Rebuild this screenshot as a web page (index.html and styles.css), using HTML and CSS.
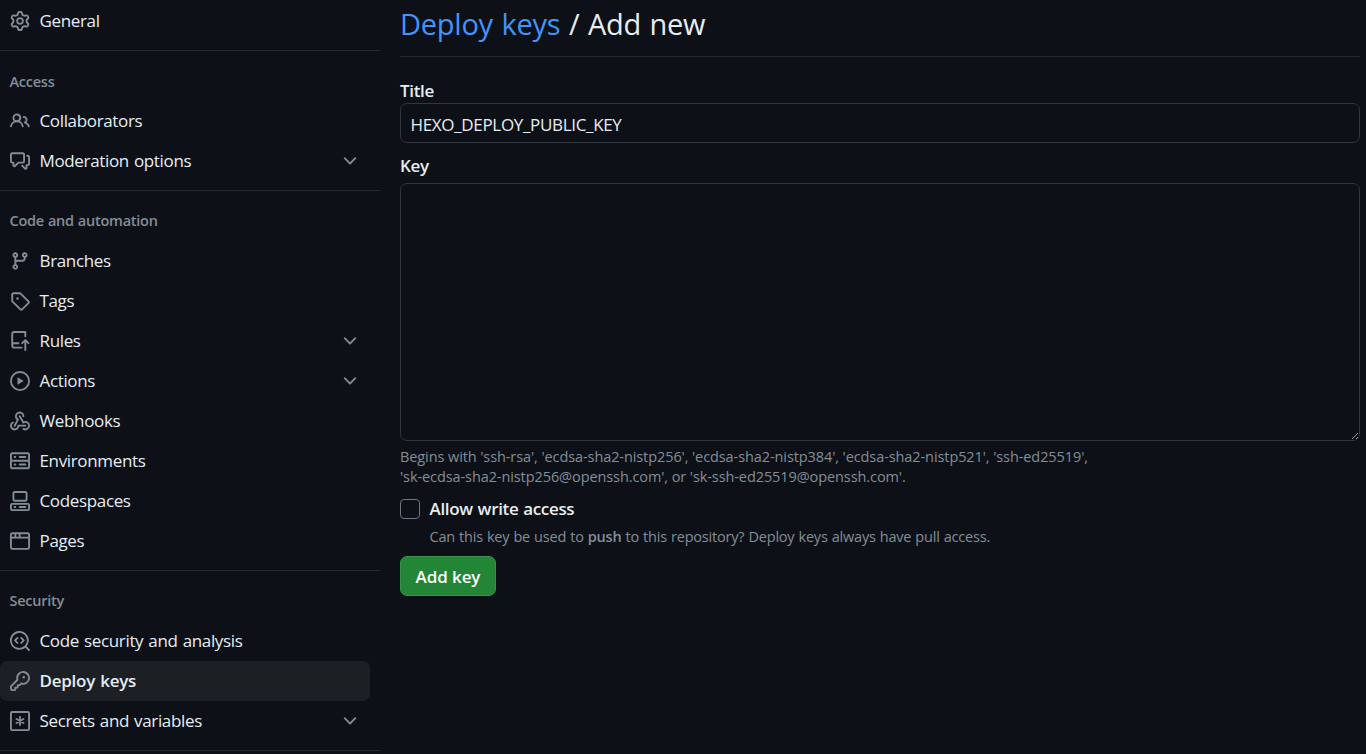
FILE: index.html
```html
<!DOCTYPE html>
<html lang="en">
<head>
<meta charset="utf-8">
<title>Deploy keys / Add new</title>
<link rel="stylesheet" href="styles.css">
</head>
<body>
<svg class="defs" width="0" height="0">
  <symbol id="chevron" viewBox="0 0 16 16"><path d="M12.78 5.22a.749.749 0 0 1 0 1.06l-4.25 4.25a.749.749 0 0 1-1.06 0L3.22 6.28a.749.749 0 1 1 1.06-1.06L8 8.939l3.72-3.719a.749.749 0 0 1 1.06 0Z"/></symbol>
</svg>
<div class="layout">
  <nav class="sidebar">
    <ul class="group">
      <li class="item"><svg class="icon" viewBox="0 0 16 16"><path d="M8 0a8.2 8.2 0 0 1 .701.031C9.444.095 9.99.645 10.16 1.29l.288 1.107c.018.066.079.158.212.224.231.114.454.243.668.386.123.082.233.09.299.071l1.103-.303c.644-.176 1.392.021 1.82.63.27.385.506.792.704 1.218.315.675.111 1.422-.364 1.891l-.814.806c-.049.048-.098.147-.088.294.016.257.016.515 0 .772-.01.147.038.246.088.294l.814.806c.475.469.679 1.216.364 1.891a7.977 7.977 0 0 1-.704 1.217c-.428.61-1.176.807-1.82.63l-1.102-.302c-.067-.019-.177-.011-.3.071a5.909 5.909 0 0 1-.668.386c-.133.066-.194.158-.211.224l-.29 1.106c-.168.646-.715 1.196-1.458 1.26a8.006 8.006 0 0 1-1.402 0c-.743-.064-1.289-.614-1.458-1.26l-.289-1.106c-.018-.066-.079-.158-.212-.224a5.738 5.738 0 0 1-.668-.386c-.123-.082-.233-.09-.299-.071l-1.103.303c-.644.176-1.392-.021-1.82-.63a8.12 8.12 0 0 1-.704-1.218c-.315-.675-.111-1.422.363-1.891l.815-.806c.05-.048.098-.147.088-.294a6.214 6.214 0 0 1 0-.772c.01-.147-.038-.246-.088-.294l-.815-.806C.635 6.045.431 5.298.746 4.623a7.92 7.92 0 0 1 .704-1.217c.428-.61 1.176-.807 1.82-.63l1.102.302c.067.019.177.011.3-.071.214-.143.437-.272.668-.386.133-.066.194-.158.211-.224l.29-1.106C6.009.645 6.556.095 7.299.03 7.53.01 7.764 0 8 0Zm-.571 1.525c-.036.003-.108.036-.137.146l-.289 1.105c-.147.561-.549.967-.998 1.189-.173.086-.34.183-.5.29-.417.278-.97.423-1.529.27l-1.103-.303c-.109-.03-.175.016-.195.045-.22.312-.412.644-.573.99-.014.031-.021.11.059.19l.815.806c.411.406.562.957.53 1.456a4.709 4.709 0 0 0 0 .582c.032.499-.119 1.05-.53 1.456l-.815.806c-.081.08-.073.159-.059.19.162.346.353.677.573.989.02.03.085.076.195.046l1.102-.303c.56-.153 1.113-.008 1.53.27.161.107.328.204.501.29.447.222.85.629.997 1.189l.289 1.105c.029.109.101.143.137.146a6.6 6.6 0 0 0 1.142 0c.036-.003.108-.036.137-.146l.289-1.105c.147-.561.549-.967.998-1.189.173-.086.34-.183.5-.29.417-.278.97-.423 1.529-.27l1.103.303c.109.029.175-.016.195-.045.22-.313.411-.644.573-.99.014-.031.021-.11-.059-.19l-.815-.806c-.411-.406-.562-.957-.53-1.456a4.709 4.709 0 0 0 0-.582c-.032-.499.119-1.05.53-1.456l.815-.806c.081-.08.073-.159.059-.19a6.464 6.464 0 0 0-.573-.989c-.02-.03-.085-.076-.195-.046l-1.102.303c-.56.153-1.113.008-1.53-.27a4.44 4.44 0 0 0-.501-.29c-.447-.222-.85-.629-.997-1.189l-.289-1.105c-.029-.11-.101-.143-.137-.146a6.6 6.6 0 0 0-1.142 0ZM11 8a3 3 0 1 1-6 0 3 3 0 0 1 6 0ZM9.5 8a1.5 1.5 0 1 0-3.001.001A1.5 1.5 0 0 0 9.5 8Z"/></svg><span class="label">General</span></li>
    </ul>

    <h3 class="heading heading-access">Access</h3>
    <ul class="group">
      <li class="item"><svg class="icon" viewBox="0 0 16 16"><path d="M2 5.5a3.5 3.5 0 1 1 5.898 2.549 5.508 5.508 0 0 1 3.034 4.084.75.75 0 1 1-1.482.235 4 4 0 0 0-7.9 0 .75.75 0 0 1-1.482-.236A5.507 5.507 0 0 1 3.102 8.05 3.493 3.493 0 0 1 2 5.5ZM11 4a3.001 3.001 0 0 1 2.22 5.018 5.01 5.01 0 0 1 2.56 3.012.749.749 0 0 1-.885.954.752.752 0 0 1-.549-.514 3.507 3.507 0 0 0-2.522-2.372.75.75 0 0 1-.574-.73v-.352a.75.75 0 0 1 .416-.672A1.5 1.5 0 0 0 11 5.5.75.75 0 0 1 11 4Zm-5.5-.5a2 2 0 1 0-.001 3.999A2 2 0 0 0 5.5 3.5Z"/></svg><span class="label">Collaborators</span></li>
      <li class="item"><svg class="icon" viewBox="0 0 16 16"><path d="M1.75 1h8.5c.966 0 1.75.784 1.75 1.75v5.5A1.75 1.75 0 0 1 10.25 10H7.061l-2.574 2.573A1.458 1.458 0 0 1 2 11.543V10h-.25A1.75 1.75 0 0 1 0 8.25v-5.5C0 1.784.784 1 1.75 1ZM1.5 2.75v5.5c0 .138.112.25.25.25h1a.75.75 0 0 1 .75.75v2.19l2.72-2.72a.749.749 0 0 1 .53-.22h3.5a.25.25 0 0 0 .25-.25v-5.5a.25.25 0 0 0-.25-.25h-8.5a.25.25 0 0 0-.25.25Zm13 2a.25.25 0 0 0-.25-.25h-.5a.75.75 0 0 1 0-1.5h.5c.966 0 1.75.784 1.75 1.75v5.5A1.75 1.75 0 0 1 14.25 12H14v1.543a1.458 1.458 0 0 1-2.487 1.03L9.22 12.28a.749.749 0 0 1 .326-1.275.749.749 0 0 1 .734.215l2.22 2.22v-2.19a.75.75 0 0 1 .75-.75h1a.25.25 0 0 0 .25-.25Z"/></svg><span class="label">Moderation options</span><svg class="chevron"><use href="#chevron"/></svg></li>
    </ul>

    <h3 class="heading">Code and automation</h3>
    <ul class="group">
      <li class="item"><svg class="icon" viewBox="0 0 16 16"><path d="M9.5 3.25a2.25 2.25 0 1 1 3 2.122V6A2.5 2.5 0 0 1 10 8.5H6a1 1 0 0 0-1 1v1.128a2.251 2.251 0 1 1-1.5 0V5.372a2.25 2.25 0 1 1 1.5 0v1.836A2.493 2.493 0 0 1 6 7h4a1 1 0 0 0 1-1v-.628A2.25 2.25 0 0 1 9.5 3.25Zm-6 0a.75.75 0 1 0 1.5 0 .75.75 0 0 0-1.5 0Zm8.25-.75a.75.75 0 1 0 0 1.5.75.75 0 0 0 0-1.5ZM4.25 12a.75.75 0 1 0 0 1.5.75.75 0 0 0 0-1.5Z"/></svg><span class="label">Branches</span></li>
      <li class="item"><svg class="icon" viewBox="0 0 16 16"><path d="M1 7.775V2.75C1 1.784 1.784 1 2.75 1h5.025c.464 0 .91.184 1.238.513l6.25 6.25a1.75 1.75 0 0 1 0 2.474l-5.026 5.026a1.75 1.75 0 0 1-2.474 0l-6.25-6.25A1.752 1.752 0 0 1 1 7.775Zm1.5 0c0 .066.026.13.073.177l6.25 6.25a.25.25 0 0 0 .354 0l5.025-5.025a.25.25 0 0 0 0-.354l-6.25-6.25a.25.25 0 0 0-.177-.073H2.75a.25.25 0 0 0-.25.25ZM6 5a1 1 0 1 1 0 2 1 1 0 0 1 0-2Z"/></svg><span class="label">Tags</span></li>
      <li class="item"><svg class="icon" viewBox="0 0 16 16"><path d="M1 2.5A2.5 2.5 0 0 1 3.5 0h8.75a.75.75 0 0 1 .75.75v3.5a.75.75 0 0 1-1.5 0V1.5h-8a1 1 0 0 0-1 1v6.708A2.493 2.493 0 0 1 3.5 9h3.25a.75.75 0 0 1 0 1.5H3.5a1 1 0 0 0 0 2h5.75a.75.75 0 0 1 0 1.5H3.5A2.5 2.5 0 0 1 1 11.5ZM12.78 6.72l2.5 2.5a.75.75 0 0 1-1.06 1.06L13 9.06v6.19a.75.75 0 0 1-1.5 0V9.06l-1.22 1.22a.75.75 0 0 1-1.06-1.06l2.5-2.5a.75.75 0 0 1 1.06 0Z"/></svg><span class="label">Rules</span><svg class="chevron"><use href="#chevron"/></svg></li>
      <li class="item"><svg class="icon" viewBox="0 0 16 16"><path d="M8 0a8 8 0 1 1 0 16A8 8 0 0 1 8 0ZM1.5 8a6.5 6.5 0 1 0 13 0 6.5 6.5 0 0 0-13 0Zm4.879-2.773 4.264 2.559a.25.25 0 0 1 0 .428l-4.264 2.559A.25.25 0 0 1 6 10.559V5.442a.25.25 0 0 1 .379-.215Z"/></svg><span class="label">Actions</span><svg class="chevron"><use href="#chevron"/></svg></li>
      <li class="item"><svg class="icon" viewBox="0 0 16 16"><path d="M5.5 4.25a2.25 2.25 0 0 1 4.5 0 .75.75 0 0 0 1.5 0 3.75 3.75 0 1 0-6.14 2.889l-2.272 4.258a.75.75 0 0 0 1.324.706L7 7.25a.75.75 0 0 0-.309-1.015A2.25 2.25 0 0 1 5.5 4.25Z"/><path d="M7.364 3.607a.75.75 0 0 1 1.03.257l2.608 4.349a3.75 3.75 0 1 1-.628 6.785.75.75 0 0 1 .752-1.299 2.25 2.25 0 1 0-.033-3.88.75.75 0 0 1-1.03-.256L7.107 4.636a.75.75 0 0 1 .257-1.03Z"/><path d="M2.9 8.776A.75.75 0 0 1 2.625 9.8 2.25 2.25 0 1 0 6 11.75a.75.75 0 0 1 .75-.751h5.5a.75.75 0 0 1 0 1.5H7.425a3.751 3.751 0 1 1-5.55-3.998.75.75 0 0 1 1.024.274Z"/></svg><span class="label">Webhooks</span></li>
      <li class="item"><svg class="icon" viewBox="0 0 16 16"><path d="M1.75 1h12.5c.966 0 1.75.784 1.75 1.75v4c0 .372-.116.717-.314 1 .198.283.314.628.314 1v4a1.75 1.75 0 0 1-1.75 1.75H1.75A1.75 1.75 0 0 1 0 12.75v-4c0-.358.109-.707.314-1a1.739 1.739 0 0 1-.314-1v-4C0 1.784.784 1 1.75 1ZM1.5 2.75v4c0 .138.112.25.25.25h12.5a.25.25 0 0 0 .25-.25v-4a.25.25 0 0 0-.25-.25H1.75a.25.25 0 0 0-.25.25Zm.25 5.75a.25.25 0 0 0-.25.25v4c0 .138.112.25.25.25h12.5a.25.25 0 0 0 .25-.25v-4a.25.25 0 0 0-.25-.25ZM7 4.75A.75.75 0 0 1 7.75 4h4.5a.75.75 0 0 1 0 1.5h-4.5A.75.75 0 0 1 7 4.75ZM7.75 10h4.5a.75.75 0 0 1 0 1.5h-4.5a.75.75 0 0 1 0-1.5ZM3 4.75A.75.75 0 0 1 3.75 4h.5a.75.75 0 0 1 0 1.5h-.5A.75.75 0 0 1 3 4.75ZM3.75 10h.5a.75.75 0 0 1 0 1.5h-.5a.75.75 0 0 1 0-1.5Z"/></svg><span class="label">Environments</span></li>
      <li class="item"><svg class="icon" viewBox="0 0 16 16"><path d="M0 11.25c0-.966.784-1.75 1.75-1.75h12.5c.966 0 1.75.784 1.75 1.75v3A1.75 1.75 0 0 1 14.25 16H1.75A1.75 1.75 0 0 1 0 14.25Zm2-9.5C2 .784 2.784 0 3.75 0h8.5C13.216 0 14 .784 14 1.75v5a1.75 1.75 0 0 1-1.75 1.75h-8.5A1.75 1.75 0 0 1 2 6.75Zm1.75-.25a.25.25 0 0 0-.25.25v5c0 .138.112.25.25.25h8.5a.25.25 0 0 0 .25-.25v-5a.25.25 0 0 0-.25-.25Zm-2 9.5a.25.25 0 0 0-.25.25v3c0 .138.112.25.25.25h12.5a.25.25 0 0 0 .25-.25v-3a.25.25 0 0 0-.25-.25ZM7 12.75a.75.75 0 0 1 .75-.75h4.5a.75.75 0 0 1 0 1.5h-4.5a.75.75 0 0 1-.75-.75Zm-4 0a.75.75 0 0 1 .75-.75h.5a.75.75 0 0 1 0 1.5h-.5a.75.75 0 0 1-.75-.75Z"/></svg><span class="label">Codespaces</span></li>
      <li class="item"><svg class="icon" viewBox="0 0 16 16"><path d="M0 2.75C0 1.784.784 1 1.75 1h12.5c.966 0 1.75.784 1.75 1.75v10.5A1.75 1.75 0 0 1 14.25 15H1.75A1.75 1.75 0 0 1 0 13.25ZM14.5 6h-13v7.25c0 .138.112.25.25.25h12.5a.25.25 0 0 0 .25-.25Zm-6-3.5v2h6V2.75a.25.25 0 0 0-.25-.25ZM5 2.5v2h2v-2Zm-3.25 0a.25.25 0 0 0-.25.25V4.5h2v-2Z"/></svg><span class="label">Pages</span></li>
    </ul>

    <h3 class="heading">Security</h3>
    <ul class="group">
      <li class="item"><svg class="icon" viewBox="0 0 16 16"><path d="M8.47 4.97a.75.75 0 0 0 0 1.06L9.94 7.5 8.47 8.97a.75.75 0 1 0 1.06 1.06l2-2a.75.75 0 0 0 0-1.06l-2-2a.75.75 0 0 0-1.06 0ZM6.53 6.03a.75.75 0 0 0-1.06-1.06l-2 2a.75.75 0 0 0 0 1.06l2 2a.75.75 0 1 0 1.06-1.06L5.06 7.5l1.47-1.47Z"/><path d="M12.246 13.307a7.501 7.501 0 1 1 1.06-1.06l2.474 2.473a.749.749 0 1 1-1.06 1.06ZM1.5 7.5a6.002 6.002 0 0 0 3.608 5.504 6.002 6.002 0 0 0 6.486-1.117.748.748 0 0 1 .292-.293A6 6 0 1 0 1.5 7.5Z"/></svg><span class="label">Code security and analysis</span></li>
      <li class="item item-current"><svg class="icon" viewBox="0 0 16 16"><path d="M10.5 0a5.499 5.499 0 1 1-1.288 10.848l-.932.932a.749.749 0 0 1-.53.22H7v.75a.749.749 0 0 1-.22.53l-.5.5a.749.749 0 0 1-.53.22H5v.75a.749.749 0 0 1-.22.53l-.5.5a.749.749 0 0 1-.53.22h-2A1.75 1.75 0 0 1 0 14.25v-2c0-.199.079-.389.22-.53l4.932-4.932A5.5 5.5 0 0 1 10.5 0Zm-4 5.5c-.001.431.069.86.205 1.269a.75.75 0 0 1-.181.768L1.5 12.56v1.69c0 .138.112.25.25.25h1.69l.06-.06v-1.19a.75.75 0 0 1 .75-.75h1.19l.06-.06v-1.19a.75.75 0 0 1 .75-.75h1.19l1.023-1.025a.75.75 0 0 1 .768-.18A4 4 0 1 0 6.5 5.5ZM11 6a1 1 0 1 1 0-2 1 1 0 0 1 0 2Z"/></svg><span class="label">Deploy keys</span></li>
      <li class="item"><svg class="icon icon-line" viewBox="0 0 16 16"><rect x=".75" y=".75" width="14.5" height="14.5" rx="1"/><path d="M8 4.75v6.5M5.2 6.4l5.6 3.2M10.8 6.4 5.2 9.6"/></svg><span class="label">Secrets and variables</span><svg class="chevron"><use href="#chevron"/></svg></li>
    </ul>
  </nav>

  <main class="content">
    <h1 class="title"><a class="crumb">Deploy keys</a> / Add new</h1>
    <form class="form">
      <label class="field-label" for="key-title">Title</label>
      <input class="text-input" id="key-title" type="text" value="HEXO_DEPLOY_PUBLIC_KEY">
      <label class="field-label field-label-key" for="key-body">Key</label>
      <textarea class="key-input" id="key-body"></textarea>
      <p class="hint">Begins with 'ssh-rsa', 'ecdsa-sha2-nistp256', 'ecdsa-sha2-nistp384', 'ecdsa-sha2-nistp521', 'ssh-ed25519',<br>'sk-ecdsa-sha2-nistp256@openssh.com', or 'sk-ssh-ed25519@openssh.com'.</p>
      <div class="check-row">
        <input class="checkbox" id="write" type="checkbox">
        <label class="check-label" for="write">Allow write access</label>
      </div>
      <p class="hint hint-check">Can this key be used to <strong>push</strong> to this repository? Deploy keys always have pull access.</p>
      <button class="submit" type="button">Add key</button>
    </form>
  </main>
</div>
</body>
</html>
```
FILE: styles.css
```css
* { box-sizing: border-box; }
body {
  margin: 0;
  height: 754px;
  overflow: hidden;
  background: #0d1117;
  color: #e6edf3;
  font-family: "Open Sans", "Noto Sans", sans-serif;
  font-size: 17px;
  letter-spacing: -0.35px;
}
.defs { display: block; }
.layout { display: flex; height: 754px; overflow: hidden; }

.sidebar { width: 380px; flex: none; padding-top: 1px; }
.group {
  list-style: none;
  margin: 0;
  padding: 0 0 9px;
  border-bottom: 1px solid #25292f;
}
.item {
  display: flex;
  align-items: center;
  width: 370px;
  height: 40px;
  padding: 0 10px;
  gap: 9.5px;
  border-radius: 7px;
  word-spacing: 1px;
}
.item-current { background: #1c1f24; font-weight: 600; letter-spacing: -0.25px; }
.label { flex: 1; line-height: 25px; padding-bottom: 2px; white-space: nowrap; }
.icon, .chevron { width: 20px; height: 20px; flex: none; fill: #848d97; }
.icon { fill-rule: evenodd; }
.icon-line { fill: none; stroke: #848d97; stroke-width: 1.5; stroke-linecap: round; }
.heading {
  height: 50px;
  margin: 0;
  padding: 20px 9.5px 0;
  color: #848d97;
  font-size: 14.5px;
  line-height: 20px;
  font-weight: 600;
  letter-spacing: -0.25px;
  word-spacing: 0.5px;
}
.heading-access { padding-top: 21px; }

.content { width: 960px; margin-left: 20px; flex: none; }
.title {
  height: 57px;
  margin: 0;
  border-bottom: 1px solid #25292f;
  font-size: 29px;
  line-height: 48px;
  font-weight: 400;
  letter-spacing: -0.25px;
  word-spacing: 1.3px;
}
.crumb { color: #4493f8; }
.form { display: flex; flex-direction: column; align-items: flex-start; padding-top: 21px; }
.field-label, .check-label { font-weight: 600; line-height: 25px; letter-spacing: -0.35px; }
.check-label { letter-spacing: -0.33px; word-spacing: 0.7px; margin-left: -0.5px; }
.field-label-key { margin: 10px 0 5px; }
.text-input, .key-input {
  width: 960px;
  border: 1px solid #30363d;
  border-radius: 7px;
  background: #0d1117;
  color: #e6edf3;
  font: inherit;
  letter-spacing: -0.33px;
  outline: 0;
}
.text-input { height: 40px; padding: 2px 9.5px 0; }
.key-input { height: 258px; padding: 10px; resize: vertical; color-scheme: dark; }
.hint {
  margin: 6px 0 0;
  color: #848d97;
  font-size: 14.5px;
  line-height: 20px;
  letter-spacing: -0.09px;
  white-space: nowrap;
}
.check-row { display: flex; align-items: center; gap: 10px; margin-top: 9px; }
.checkbox {
  appearance: none;
  width: 20px;
  height: 20px;
  margin: 0;
  border: 1px solid #6e7681;
  border-radius: 4px;
}
.hint-check { margin: 6px 0 0 29.5px; letter-spacing: -0.2px; word-spacing: 0.5px; }
.hint strong { font-weight: 600; }
.submit {
  width: 96px;
  height: 40px;
  margin-top: 9px;
  padding: 0;
  border: 1px solid #36914a;
  border-radius: 7px;
  background: #238636;
  color: #fff;
  font: inherit;
  font-weight: 600;
  letter-spacing: -0.1px;
}
```
